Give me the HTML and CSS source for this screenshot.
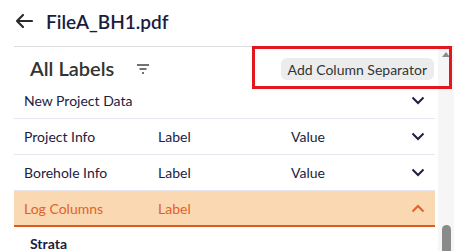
FILE: index.html
```html
<!DOCTYPE html>
<html lang="en">
<head>
    <meta charset="UTF-8">
    <meta name="viewport" content="width=device-width, initial-scale=1.0">
    <title>FileA_BH1.pdf</title>
    <link rel="stylesheet" href="styles.css">
</head>
<body>
    <div class="page">
        <div class="header">
            <svg class="back" width="20" height="16" viewBox="0 0 20 16">
                <path d="M18 8H3M9 2L3 8l6 6" fill="none" stroke="#2b2b2b" stroke-width="2.2" stroke-linecap="round" stroke-linejoin="round"/>
            </svg>
            <h1 class="title">FileA_BH1.pdf</h1>
        </div>

        <div class="panel">
            <div class="content">
                <div class="toolbar">
                    <div class="heading">
                        <h2>All Labels</h2>
                        <svg class="filter" width="14" height="12" viewBox="0 0 14 12">
                            <path d="M1 2h12M3.5 6h7M6 10h2" stroke="#444" stroke-width="1.6"/>
                        </svg>
                    </div>
                    <button class="sep-btn">Add Column Separator</button>
                </div>

                <div class="list">
                    <div class="list-inner">
                        <div class="row">
                            <span>New Project Data</span><span></span><span></span>
                            <svg class="chev" width="14" height="9" viewBox="0 0 14 9"><path d="M1.5 1.5L7 7l5.5-5.5" fill="none" stroke="#1c2140" stroke-width="2"/></svg>
                        </div>
                        <div class="row">
                            <span>Project Info</span><span>Label</span><span>Value</span>
                            <svg class="chev" width="14" height="9" viewBox="0 0 14 9"><path d="M1.5 1.5L7 7l5.5-5.5" fill="none" stroke="#1c2140" stroke-width="2"/></svg>
                        </div>
                        <div class="row">
                            <span>Borehole Info</span><span>Label</span><span>Value</span>
                            <svg class="chev" width="14" height="9" viewBox="0 0 14 9"><path d="M1.5 1.5L7 7l5.5-5.5" fill="none" stroke="#1c2140" stroke-width="2"/></svg>
                        </div>
                        <div class="row open">
                            <span>Log Columns</span><span>Label</span><span></span>
                            <svg class="chev" width="14" height="9" viewBox="0 0 14 9"><path d="M1.5 7.5L7 2l5.5 5.5" fill="none" stroke="#e0622a" stroke-width="2"/></svg>
                        </div>
                        <div class="sub">Strata</div>
                    </div>
                </div>
            </div>

            <div class="scrollbar">
                <div class="arrow"></div>
                <div class="thumb"></div>
            </div>

            <div class="highlight"></div>
        </div>
    </div>
</body>
</html>
```

FILE: styles.css
```css
body { margin: 0; font-family: Lato, "Noto Sans", sans-serif; color: #1c2140; background: #fff; }
.page { width: 460px; height: 251px; overflow: hidden; }

.header { height: 46px; display: flex; align-items: center; padding-left: 14px; }
.back { margin-right: 12px; margin-top: -4px; }
.title { margin: 0; font-size: 19px; font-weight: 600; color: #1a1d3d; margin-top: -3px; }

.panel { position: relative; display: flex; border-top: 1px solid #dcdcdc; margin-left: 14px; width: 440px; height: 204px; }
.content { width: 421px; display: flex; flex-direction: column; }

.toolbar { height: 42px; display: flex; align-items: center; justify-content: space-between; }
.heading { display: flex; align-items: center; padding-left: 16px; }
.heading h2 { margin: 0; font-size: 20px; font-weight: 600; color: #333; }
.filter { margin-left: 22px; margin-top: 2px; }
.sep-btn { font-family: inherit; font-size: 14px; color: #333; background: #ececec; border: none; border-radius: 6px; height: 22px; padding: 0 7px; margin-right: 1px; margin-top: 2px; }

.list { flex: 1; overflow: hidden; }
.list-inner { margin-top: -6px; }
.row { height: 35px; display: grid; grid-template-columns: 134px 133px 1fr 14px; align-items: center; padding: 0 10px; border-bottom: 1px solid #e6e6ef; font-size: 14px; color: #1c2140; }
.row.open { background: #fad8b1; color: #e0622a; border-bottom: 2px solid #dc5a1e; height: 34px; }
.chev { display: block; }
.sub { padding: 8px 0 0 16px; font-size: 14px; font-weight: 700; color: #1a1d3d; }

.scrollbar { width: 16px; margin-left: 3px; background: #f6f6f6; position: relative; }
.arrow { width: 0; height: 0; margin: 5px auto 0; border-left: 4px solid transparent; border-right: 4px solid transparent; border-bottom: 5px solid #8c8c8c; }
.thumb { position: absolute; left: 4px; bottom: -6px; width: 9px; height: 32px; border-radius: 5px; background: #8a8a8a; }

.highlight { position: absolute; left: 238px; top: -1px; width: 194px; height: 37px; border: 3px solid #e3171e; }
```
